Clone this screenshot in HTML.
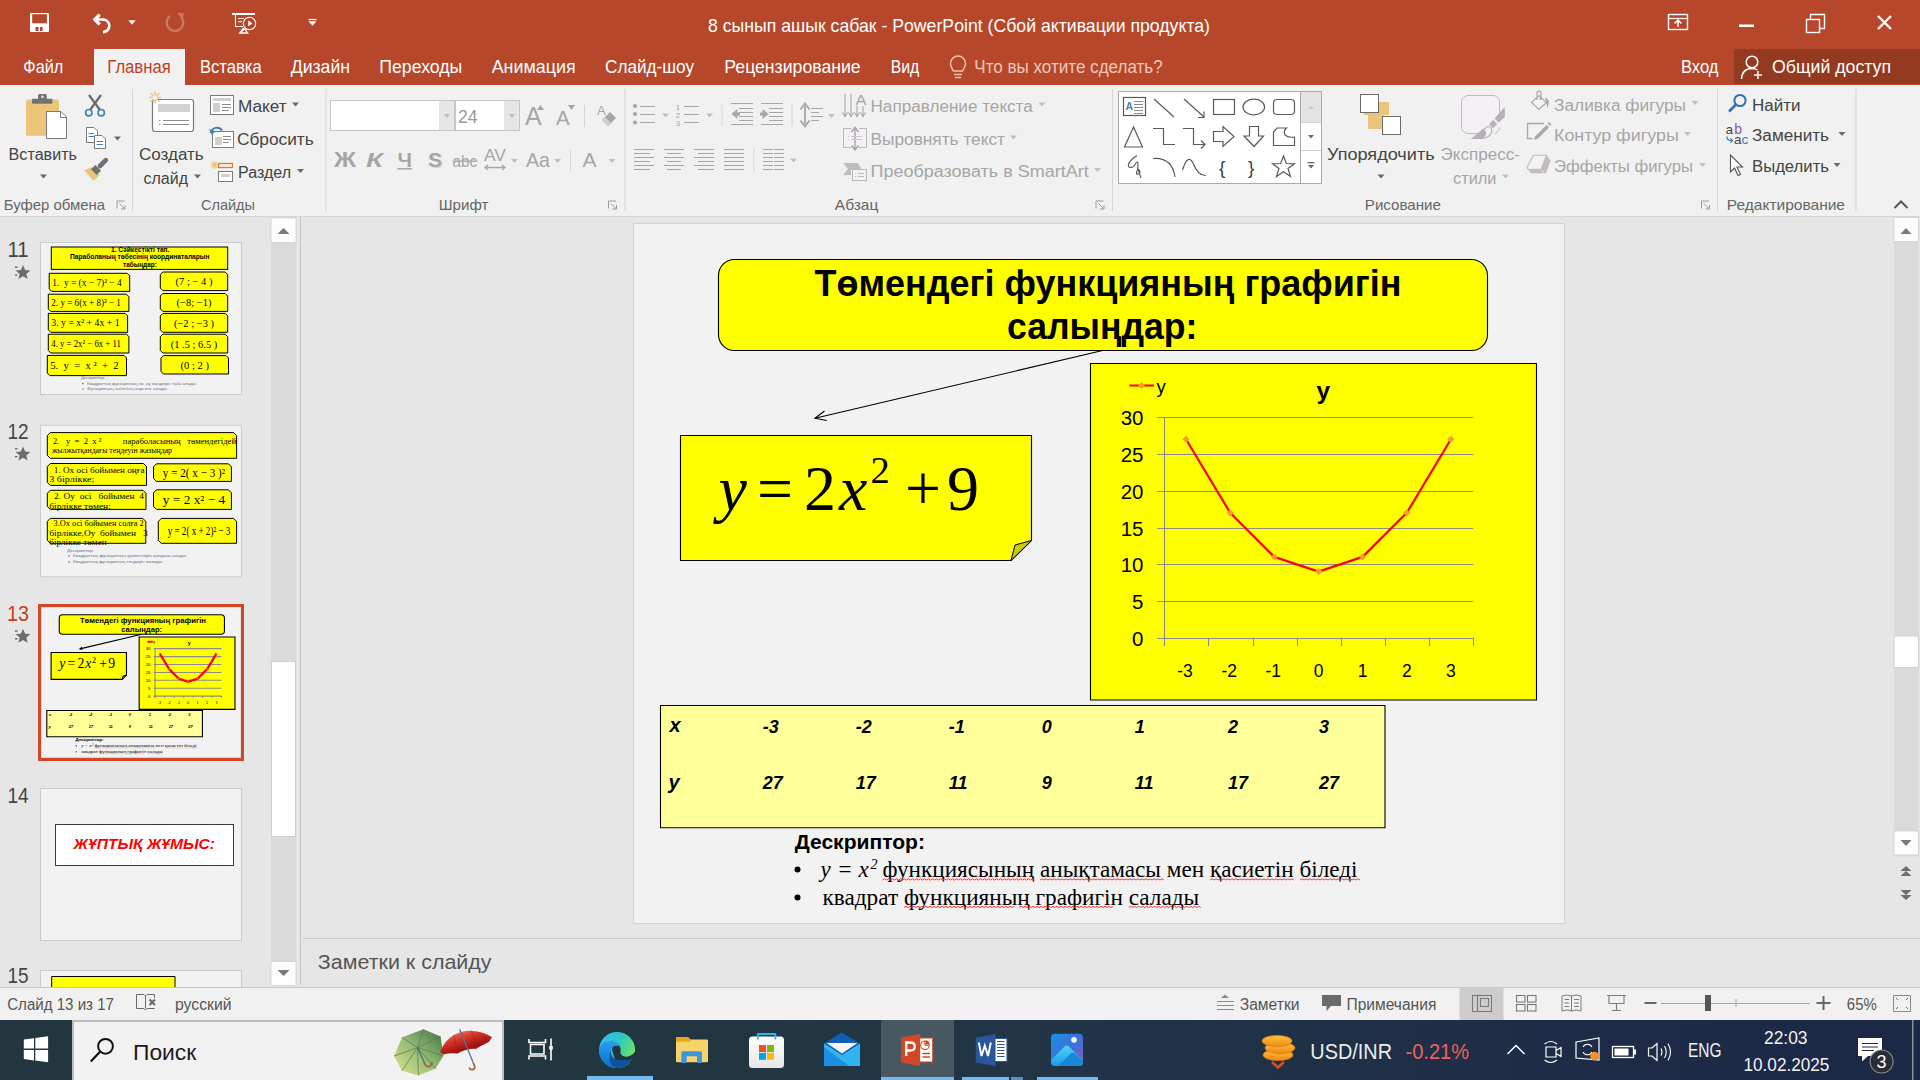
<!DOCTYPE html>
<html><head><meta charset="utf-8"><title>PowerPoint</title>
<style>*{margin:0;padding:0}html,body{width:1920px;height:1080px;overflow:hidden;background:#e6e6e6}svg{display:block}text{white-space:pre}#slide *{vector-effect:non-scaling-stroke}</style>
</head><body>
<svg width="1920" height="1080" viewBox="0 0 1920 1080" font-family="Liberation Sans">
<rect x="0" y="0" width="1920" height="85" fill="#b7472a" />
<rect x="0" y="85" width="1920" height="131" fill="#f1f1f1" />
<rect x="0" y="216" width="1920" height="1" fill="#d6d6d6" />
<rect x="0" y="217" width="1920" height="770" fill="#e6e6e6" />
<rect x="0" y="987" width="1920" height="33" fill="#f1f1f1" />
<rect x="0" y="987" width="1920" height="1" fill="#c6c6c6" />
<rect x="0" y="1020" width="1920" height="60" fill="#1f2e38" />
<rect x="30" y="13" width="19" height="19" fill="#ffffff" rx="1.2" />
<rect x="32.2" y="14.2" width="14.7" height="9.1" fill="#b7472a" />
<rect x="35.5" y="27" width="3" height="4" fill="#b7472a" />
<rect x="40" y="27" width="2.6" height="4" fill="#b7472a" />
<path d="M95,19.5 H103 A6.3,6.3 0 0 1 103,32.1 H104" fill="none" stroke="#ffffff" stroke-width="2.6" />
<path d="M92.5,19.5 L98.5,13.5 L100.8,15.8 L97.1,19.5 L100.8,23.2 L98.5,25.5 Z" fill="#ffffff" />
<path d="M128.25,20.25 L135.75,20.25 L132,24.75 Z" fill="#f0f0f0" />
<path d="M181.5,17.5 A8.3,8.3 0 1 1 170,16" fill="none" stroke="#cd7862" stroke-width="2.4" />
<path d="M177,12.5 L184,13.5 L182.5,20 Z" fill="#cd7862" />
<rect x="232" y="13" width="23" height="2" fill="#ffffff" />
<path d="M235.5,15 V26.5 H243 M238,18.5 H244 M238,21.8 H242" fill="none" stroke="#ffffff" stroke-width="1.1" />
<circle cx="249.5" cy="23.4" r="6.2" fill="none" stroke="#fff" stroke-width="1.1"/>
<path d="M248,20.3 L252.5,23.4 L248,26.5 Z" fill="#f0f0f0" />
<path d="M243,27.5 L238.5,33.8 H249 L245.5,29" fill="#ffffff" />
<path d="M241.5,32.3 H246.5 L244.5,30 Z" fill="#b7472a" />
<path d="M308.5,19.5 H316.5" fill="none" stroke="#ffffff" stroke-width="1.2" />
<path d="M308.5,21.25 L316.5,21.25 L312.5,25.75 Z" fill="#ffffff" />
<text x="708" y="31.5" font-size="18.5" fill="#ffffff" font-family="Liberation Sans" textLength="502" lengthAdjust="spacingAndGlyphs" >8 сынып ашык сабак - PowerPoint (Сбой активации продукта)</text>
<rect x="1668.5" y="14.5" width="19" height="15" fill="none" stroke="#ffffff" stroke-width="1.4" />
<path d="M1669,18.5 H1687" fill="none" stroke="#ffffff" stroke-width="1.2" />
<path d="M1678,27 V20.5 M1674.5,23.5 L1678,20 L1681.5,23.5" fill="none" stroke="#ffffff" stroke-width="1.5" />
<rect x="1739" y="24.5" width="15" height="2.5" fill="#ffffff" />
<rect x="1806.5" y="19.5" width="13" height="13" fill="none" stroke="#ffffff" stroke-width="1.4" />
<path d="M1810.5,19.5 V14.5 H1824.5 V28.5 H1819.5" fill="none" stroke="#ffffff" stroke-width="1.4" />
<path d="M1878,16 L1891,29 M1891,16 L1878,29" fill="none" stroke="#ffffff" stroke-width="2.4" />
<rect x="94" y="49" width="91" height="36" fill="#f1f1f1" />
<text x="23.3" y="73.3" font-size="18.3" fill="#ffffff" font-family="Liberation Sans" textLength="40.0" lengthAdjust="spacingAndGlyphs" >Файл</text>
<text x="107.3" y="73.3" font-size="18.3" fill="#c43e1c" font-family="Liberation Sans" textLength="63.4" lengthAdjust="spacingAndGlyphs" >Главная</text>
<text x="200" y="73.3" font-size="18.3" fill="#ffffff" font-family="Liberation Sans" textLength="61.7" lengthAdjust="spacingAndGlyphs" >Вставка</text>
<text x="290.7" y="73.3" font-size="18.3" fill="#ffffff" font-family="Liberation Sans" textLength="59.3" lengthAdjust="spacingAndGlyphs" >Дизайн</text>
<text x="379.3" y="73.3" font-size="18.3" fill="#ffffff" font-family="Liberation Sans" textLength="83.0" lengthAdjust="spacingAndGlyphs" >Переходы</text>
<text x="491.7" y="73.3" font-size="18.3" fill="#ffffff" font-family="Liberation Sans" textLength="84.0" lengthAdjust="spacingAndGlyphs" >Анимация</text>
<text x="605" y="73.3" font-size="18.3" fill="#ffffff" font-family="Liberation Sans" textLength="89" lengthAdjust="spacingAndGlyphs" >Слайд-шоу</text>
<text x="724.3" y="73.3" font-size="18.3" fill="#ffffff" font-family="Liberation Sans" textLength="136.4" lengthAdjust="spacingAndGlyphs" >Рецензирование</text>
<text x="890.7" y="73.3" font-size="18.3" fill="#ffffff" font-family="Liberation Sans" textLength="28.6" lengthAdjust="spacingAndGlyphs" >Вид</text>
<path d="M953.5,71 C951,67 950.5,65 950.5,63.5 A7.5,7.5 0 0 1 965.5,63.5 C965.5,65 965,67 962.5,71 Z" fill="none" stroke="#f2c2b2" stroke-width="1.5" />
<path d="M954,74.5 H962 M955,77.5 H961" fill="none" stroke="#f2c2b2" stroke-width="1.5" />
<text x="974.3" y="73.3" font-size="18.3" fill="#f2c7b8" font-family="Liberation Sans" textLength="188.4" lengthAdjust="spacingAndGlyphs" >Что вы хотите сделать?</text>
<text x="1681" y="73" font-size="18.3" fill="#ffffff" font-family="Liberation Sans" textLength="37.5" lengthAdjust="spacingAndGlyphs" >Вход</text>
<rect x="1734" y="49" width="186" height="35" fill="#943a21" />
<circle cx="1752" cy="62" r="5.8" fill="none" stroke="#fff" stroke-width="1.5"/>
<path d="M1741.5,79 C1742,72 1746,68.5 1752,68.5 C1754,68.5 1756,69 1757.5,70" fill="none" stroke="#ffffff" stroke-width="1.5" />
<path d="M1758,71 V79 M1754,75 H1762" fill="none" stroke="#ffffff" stroke-width="1.5" />
<text x="1772" y="73" font-size="18.3" fill="#ffffff" font-family="Liberation Sans" textLength="119" lengthAdjust="spacingAndGlyphs" >Общий доступ</text>
<path d="M26,101.5 Q26,99.6 28,99.6 H57 Q59,99.6 59,101.5 V135.7 H26 Z" fill="#ebc57a" />
<rect x="32" y="98.7" width="20.4" height="5" fill="#737373" rx="0.8" />
<rect x="38" y="94" width="8.8" height="5.5" fill="#737373" rx="1.5" />
<circle cx="42.4" cy="96.8" r="1.2" fill="#f1f1f1"/>
<path d="M46.5,111.5 H61 L66.5,117 V138.5 H46.5 Z" fill="#ffffff" stroke="#7a7a7a" stroke-width="1" />
<path d="M60.5,111.5 V117.5 H66.5" fill="none" stroke="#7a7a7a" stroke-width="1" />
<text x="8.6" y="160" font-size="17.3" fill="#444444" font-family="Liberation Sans" textLength="68.4" lengthAdjust="spacingAndGlyphs" >Вставить</text>
<path d="M40.0,174.5 L47.0,174.5 L43.5,178.5 Z" fill="#6a6a6a" />
<path d="M89,95 L100,110 M101,95 L90,110" fill="none" stroke="#6a6a6a" stroke-width="2.2" />
<circle cx="88.8" cy="112.7" r="3.2" fill="none" stroke="#3f7fbf" stroke-width="1.6"/>
<circle cx="101.2" cy="112.7" r="3.2" fill="none" stroke="#3f7fbf" stroke-width="1.6"/>
<path d="M86.5,127.5 H94 L97.5,131 V142.5 H86.5 Z" fill="#fff" stroke="#7a7a7a" stroke-width="1" />
<path d="M94.5,135.5 H102 L105.5,139 V148.5 H94.5 Z" fill="#fff" stroke="#7a7a7a" stroke-width="1" />
<path d="M88.5,133.5 H94 M88.5,136.5 H94 M96.5,141.5 H103 M96.5,144.5 H103" fill="none" stroke="#3f7fbf" stroke-width="1" />
<path d="M114.0,136.5 L121.0,136.5 L117.5,140.5 Z" fill="#6a6a6a" />
<path d="M84.1,170.2 L91.6,167.3 L99.7,174.9 L93.5,181 Z" fill="#ebc57a" />
<line x1="93.8" y1="172.2" x2="98.2" y2="167.8" stroke="#6f6f6f" stroke-width="8" />
<line x1="100" y1="166" x2="105.8" y2="160.2" stroke="#6f6f6f" stroke-width="4.6" stroke-linecap="round"/>
<text x="3.8" y="209.6" font-size="14.8" fill="#666666" font-family="Liberation Sans" textLength="101.2" lengthAdjust="spacingAndGlyphs" >Буфер обмена</text>
<path d="M117.0,208.5 V201.0 H124.5" fill="none" stroke="#9a9a9a" stroke-width="1" />
<path d="M119.5,203.5 L124.5,208.5 M125.0,205.0 V209.0 H121.0" fill="none" stroke="#9a9a9a" stroke-width="1" />
<rect x="132" y="89" width="1" height="122" fill="#d5d5d5" />
<rect x="152.5" y="99.5" width="41" height="32" fill="#fff" stroke="#7a7a7a" stroke-width="1.2" rx="2.5" />
<rect x="158" y="104" width="32" height="8" fill="#d2d2d2" />
<path d="M159,120.5 H160.5 M163,120.5 H189 M159,124.5 H160.5 M163,124.5 H189" fill="none" stroke="#8a8a8a" stroke-width="1" />
<path d="M155,91.5 V103.5 M149,97.5 H161 M150.8,93.3 L159.2,101.7 M159.2,93.3 L150.8,101.7" fill="none" stroke="#ebc57a" stroke-width="1.6" />
<circle cx="155" cy="97.5" r="2.3" fill="#f1f1f1"/>
<text x="139" y="160" font-size="17.3" fill="#444444" font-family="Liberation Sans" textLength="64.7" lengthAdjust="spacingAndGlyphs" >Создать</text>
<text x="143.5" y="184" font-size="17.3" fill="#444444" font-family="Liberation Sans" textLength="44.5" lengthAdjust="spacingAndGlyphs" >слайд</text>
<path d="M194.0,174.5 L201.0,174.5 L197.5,178.5 Z" fill="#6a6a6a" />
<rect x="210.5" y="95.5" width="23" height="19" fill="#fff" stroke="#7a7a7a" stroke-width="1" />
<rect x="213" y="98" width="18" height="3" fill="#cfcfcf" />
<rect x="213" y="103" width="7" height="9" fill="#cfcfcf" />
<path d="M222,104.5 H231 M222,107.5 H231 M222,110.5 H229" fill="none" stroke="#8a8a8a" stroke-width="1" />
<text x="238" y="112" font-size="17.3" fill="#444444" font-family="Liberation Sans" textLength="48.7" lengthAdjust="spacingAndGlyphs" >Макет</text>
<path d="M292.0,102.5 L299.0,102.5 L295.5,106.5 Z" fill="#6a6a6a" />
<rect x="212.5" y="131.5" width="21" height="16" fill="#fff" stroke="#7a7a7a" stroke-width="1" />
<rect x="215" y="137" width="7" height="8" fill="#cfcfcf" />
<path d="M223,136.5 H231 M223,139.5 H231 M223,142.5 H229" fill="none" stroke="#8a8a8a" stroke-width="1" />
<path d="M211,133 A6,6 0 0 1 222,130.5" fill="none" stroke="#3f7fbf" stroke-width="2" />
<path d="M209,129 L211.5,134.5 L216,131.5 Z" fill="#3f7fbf" />
<text x="237" y="144.6" font-size="17.3" fill="#444444" font-family="Liberation Sans" textLength="76.7" lengthAdjust="spacingAndGlyphs" >Сбросить</text>
<path d="M214.5,161 V169 M210.5,165 H218.5 M211.8,162.2 L217.2,167.8 M217.2,162.2 L211.8,167.8" fill="none" stroke="#ebc57a" stroke-width="1.2" />
<rect x="218.5" y="163.5" width="14" height="4" fill="none" stroke="#e07a2f" stroke-width="1.3" />
<rect x="218.5" y="171.5" width="14" height="10" fill="#fff" stroke="#7a7a7a" stroke-width="1" />
<rect x="221" y="174" width="9" height="3" fill="#cfcfcf" />
<text x="238" y="178" font-size="17.3" fill="#444444" font-family="Liberation Sans" textLength="53" lengthAdjust="spacingAndGlyphs" >Раздел</text>
<path d="M297.0,169.0 L304.0,169.0 L300.5,173.0 Z" fill="#6a6a6a" />
<text x="201" y="209.6" font-size="14.8" fill="#666666" font-family="Liberation Sans" textLength="54" lengthAdjust="spacingAndGlyphs" >Слайды</text>
<rect x="325.5" y="89" width="1" height="122" fill="#d5d5d5" />
<rect x="330.5" y="100.5" width="124" height="30" fill="#fff" stroke="#c6c6c6" stroke-width="1" />
<rect x="439" y="101" width="15" height="29" fill="#e6e6e6" />
<path d="M443.5,114.0 L450.5,114.0 L447,118.0 Z" fill="#c0c0c0" />
<rect x="455.5" y="100.5" width="64" height="30" fill="#fff" stroke="#c6c6c6" stroke-width="1" />
<rect x="504" y="101" width="15" height="29" fill="#e6e6e6" />
<path d="M508.5,114.0 L515.5,114.0 L512,118.0 Z" fill="#c0c0c0" />
<text x="458" y="123" font-size="17.5" fill="#9a9a9a" font-family="Liberation Sans" textLength="19.6" lengthAdjust="spacingAndGlyphs" >24</text>
<text x="525" y="124.5" font-size="25" fill="#a6a6a6" font-family="Liberation Sans" >A</text>
<path d="M537,110 L540.5,105 L544,110 Z" fill="#a6a6a6" />
<text x="556" y="124.5" font-size="20.5" fill="#a6a6a6" font-family="Liberation Sans" >A</text>
<path d="M568,105 L571.5,110 L575,105 Z" fill="#a6a6a6" />
<rect x="584" y="105" width="1" height="22" fill="#d5d5d5" />
<text x="597" y="115" font-size="13" fill="#a6a6a6" font-family="Liberation Sans" >A</text>
<path d="M602,120 L610,112 L616,118 L608,126 Z" fill="#a6a6a6" />
<path d="M602,120 L605,117 L611,123 L608,126 Z" fill="#d0d0d0" />
<text x="334" y="167.3" font-size="22" fill="#a6a6a6" font-family="Liberation Sans" font-weight="bold" textLength="22" lengthAdjust="spacingAndGlyphs">Ж</text>
<text x="366" y="167.3" font-size="21" fill="#a6a6a6" font-family="Liberation Sans" font-weight="bold" font-style="italic" textLength="17" lengthAdjust="spacingAndGlyphs">К</text>
<text x="397.5" y="166.5" font-size="20" fill="#a6a6a6" font-family="Liberation Sans" font-weight="bold" textLength="14.5" lengthAdjust="spacingAndGlyphs">Ч</text>
<rect x="397.5" y="168" width="14.5" height="1.5" fill="#a6a6a6" />
<text x="428" y="167.3" font-size="21" fill="#d6d6d6" font-family="Liberation Sans" font-weight="bold" transform="translate(1.2,1.2)">S</text>
<text x="428" y="167.3" font-size="21" fill="#a6a6a6" font-family="Liberation Sans" font-weight="bold" >S</text>
<text x="452.5" y="167" font-size="16" fill="#a6a6a6" font-family="Liberation Sans" textLength="24.5" lengthAdjust="spacingAndGlyphs">abc</text>
<rect x="452.5" y="160.5" width="25" height="1.3" fill="#a6a6a6" />
<text x="484" y="161" font-size="16" fill="#a6a6a6" font-family="Liberation Sans" textLength="22" lengthAdjust="spacingAndGlyphs">AV</text>
<path d="M485,167.5 H505 M488,165 L485,167.5 L488,170 M502,165 L505,167.5 L502,170" fill="none" stroke="#a6a6a6" stroke-width="1.3" />
<path d="M511.0,159.0 L518.0,159.0 L514.5,163.0 Z" fill="#c0c0c0" />
<text x="526" y="167.3" font-size="21" fill="#a6a6a6" font-family="Liberation Sans" textLength="24" lengthAdjust="spacingAndGlyphs">Aa</text>
<path d="M554.0,159.0 L561.0,159.0 L557.5,163.0 Z" fill="#c0c0c0" />
<rect x="570" y="150" width="1" height="22" fill="#d5d5d5" />
<text x="582.5" y="167.3" font-size="21" fill="#a6a6a6" font-family="Liberation Sans" >A</text>
<path d="M608.5,159.0 L615.5,159.0 L612,163.0 Z" fill="#c0c0c0" />
<text x="438.8" y="209.6" font-size="14.8" fill="#666666" font-family="Liberation Sans" textLength="49.6" lengthAdjust="spacingAndGlyphs" >Шрифт</text>
<path d="M608.5,208.5 V201.0 H616" fill="none" stroke="#9a9a9a" stroke-width="1" />
<path d="M611,203.5 L616,208.5 M616.5,205.0 V209.0 H612.5" fill="none" stroke="#9a9a9a" stroke-width="1" />
<rect x="624.5" y="89" width="1" height="122" fill="#d5d5d5" />
<circle cx="635" cy="106" r="2.1" fill="#a6a6a6"/>
<circle cx="635" cy="114" r="2.1" fill="#a6a6a6"/>
<circle cx="635" cy="122.5" r="2.1" fill="#a6a6a6"/>
<path d="M640,106.5 H655 M640,114.5 H655 M640,122.5 H655" fill="none" stroke="#a6a6a6" stroke-width="1" />
<path d="M662.0,113.5 L669.0,113.5 L665.5,117.5 Z" fill="#c0c0c0" />
<text x="675.8" y="110" font-size="7.8" fill="#a6a6a6" font-family="Liberation Sans" >1</text>
<text x="675.8" y="118" font-size="7.8" fill="#a6a6a6" font-family="Liberation Sans" >2</text>
<text x="675.8" y="126" font-size="7.8" fill="#a6a6a6" font-family="Liberation Sans" >3</text>
<path d="M684,106.5 H699 M684,114.5 H699 M684,122.5 H699" fill="none" stroke="#a6a6a6" stroke-width="1" />
<path d="M706.0,113.5 L713.0,113.5 L709.5,117.5 Z" fill="#c0c0c0" />
<rect x="721.5" y="105" width="1" height="21" fill="#d5d5d5" />
<path d="M739,108.5 H753 M739,112.5 H753 M739,116.5 H753 M739,120.5 H753" fill="none" stroke="#a6a6a6" stroke-width="1" />
<path d="M731,103.5 H753 M731,124.5 H753" fill="none" stroke="#a6a6a6" stroke-width="1" />
<path d="M737.5,109 L731.5,114 L737.5,119 Z" fill="#a6a6a6" />
<rect x="735" y="112.5" width="5" height="3" fill="#a6a6a6" />
<path d="M769,108.5 H783 M769,112.5 H783 M769,116.5 H783 M769,120.5 H783" fill="none" stroke="#a6a6a6" stroke-width="1" />
<path d="M761,103.5 H783 M761,124.5 H783" fill="none" stroke="#a6a6a6" stroke-width="1" />
<path d="M762.5,109 L768.5,114 L762.5,119 Z" fill="#a6a6a6" />
<rect x="760" y="112.5" width="4" height="3" fill="#a6a6a6" />
<rect x="791.5" y="105" width="1" height="21" fill="#d5d5d5" />
<path d="M805,106 V124" fill="none" stroke="#a6a6a6" stroke-width="1.8" />
<path d="M800.5,109.5 L805,103.5 L809.5,109.5 M800.5,120.5 L805,126.5 L809.5,120.5" fill="none" stroke="#a6a6a6" stroke-width="1.8" />
<path d="M811,108.5 H823 M811,116.5 H823" fill="none" stroke="#a6a6a6" stroke-width="1" />
<path d="M811,112.5 H819 M811,120.5 H819" fill="none" stroke="#a6a6a6" stroke-width="1" />
<path d="M828.0,114.0 L835.0,114.0 L831.5,118.0 Z" fill="#c0c0c0" />
<path d="M845,94 V116.5 M851,94 V116.5 M857,106 V116.5 M863,106 V116.5" fill="none" stroke="#a6a6a6" stroke-width="1.1" />
<path d="M842.5,112.5 L845,116.5 L847.5,112.5 M848.5,112.5 L851,116.5 L853.5,112.5 M854.5,112.5 L857,116.5 L859.5,112.5 M860.5,112.5 L863,116.5 L865.5,112.5" fill="none" stroke="#a6a6a6" stroke-width="1.1" />
<text x="855.5" y="104.5" font-size="14" fill="#a6a6a6" font-family="Liberation Sans" textLength="11" lengthAdjust="spacingAndGlyphs">A</text>
<text x="870.5" y="111.8" font-size="17.3" fill="#a6a6a6" font-family="Liberation Sans" textLength="162.3" lengthAdjust="spacingAndGlyphs" >Направление текста</text>
<path d="M1038.5,102.5 L1045.5,102.5 L1042,106.5 Z" fill="#c0c0c0" />
<rect x="843.5" y="128.5" width="23" height="19" fill="#f5f0f5" />
<path d="M851,128.5 H843.5 V147.5 H851 M859,128.5 H866.5 V147.5 H859" fill="none" stroke="#b9b9b9" stroke-width="1" />
<path d="M855,129 V149.5" fill="none" stroke="#a6a6a6" stroke-width="1.4" />
<path d="M851.5,132 L855,127.5 L858.5,132 M851.5,145.5 L855,149.8 L858.5,145.5" fill="none" stroke="#a6a6a6" stroke-width="1.6" />
<path d="M848,136.5 H849 M851,136.5 H862 M848,139.5 H849 M851,139.5 H862" fill="none" stroke="#c8c8c8" stroke-width="1" />
<text x="870.5" y="144.9" font-size="17.3" fill="#a6a6a6" font-family="Liberation Sans" textLength="134.5" lengthAdjust="spacingAndGlyphs" >Выровнять текст</text>
<path d="M1010.0,135.5 L1017.0,135.5 L1013.5,139.5 Z" fill="#c0c0c0" />
<path d="M843,163 H858 L862,170 H851 V175 H843 L848,169 Z" fill="#bdbdbd" />
<rect x="852.5" y="169.5" width="14" height="11" fill="#f5f0f5" stroke="#b9b9b9" stroke-width="1" />
<path d="M855,173.5 H856 M857.5,173.5 H864 M855,176.5 H856 M857.5,176.5 H864" fill="none" stroke="#bdbdbd" stroke-width="1" />
<text x="870.5" y="177.4" font-size="17.3" fill="#a6a6a6" font-family="Liberation Sans" textLength="218.2" lengthAdjust="spacingAndGlyphs" >Преобразовать в SmartArt</text>
<path d="M1094.0,168.0 L1101.0,168.0 L1097.5,172.0 Z" fill="#c0c0c0" />
<path d="M634,149.5 H654 M634,157.5 H654 M634,165.5 H654" fill="none" stroke="#a6a6a6" stroke-width="1" />
<path d="M634,153.5 H650 M634,161.5 H650 M634,169.5 H650" fill="none" stroke="#a6a6a6" stroke-width="1" />
<path d="M664,149.5 H684 M664,157.5 H684 M664,165.5 H684" fill="none" stroke="#a6a6a6" stroke-width="1" />
<path d="M667,153.5 H681 M667,161.5 H681 M667,169.5 H681" fill="none" stroke="#a6a6a6" stroke-width="1" />
<path d="M694,149.5 H714 M694,157.5 H714 M694,165.5 H714" fill="none" stroke="#a6a6a6" stroke-width="1" />
<path d="M698,153.5 H714 M698,161.5 H714 M698,169.5 H714" fill="none" stroke="#a6a6a6" stroke-width="1" />
<path d="M724,149.5 H744 M724,153.5 H744 M724,157.5 H744 M724,161.5 H744 M724,165.5 H744 M724,169.5 H744" fill="none" stroke="#a6a6a6" stroke-width="1" />
<rect x="753.3" y="148" width="1" height="24" fill="#d5d5d5" />
<path d="M763,149.5 H773 M763,153.5 H773 M763,157.5 H773 M763,161.5 H773 M763,165.5 H773 M763,169.5 H773" fill="none" stroke="#a6a6a6" stroke-width="1" />
<path d="M774,149.5 H784 M774,153.5 H784 M774,157.5 H784 M774,161.5 H784 M774,165.5 H784 M774,169.5 H784" fill="none" stroke="#a6a6a6" stroke-width="1" />
<path d="M790.0,158.5 L797.0,158.5 L793.5,162.5 Z" fill="#c0c0c0" />
<text x="834.8" y="209.5" font-size="14.8" fill="#666666" font-family="Liberation Sans" textLength="43.5" lengthAdjust="spacingAndGlyphs" >Абзац</text>
<path d="M1096.0,208.5 V201.0 H1103.5" fill="none" stroke="#9a9a9a" stroke-width="1" />
<path d="M1098.5,203.5 L1103.5,208.5 M1104.0,205.0 V209.0 H1100.0" fill="none" stroke="#9a9a9a" stroke-width="1" />
<rect x="1112" y="89" width="1" height="122" fill="#d5d5d5" />
<rect x="1118.5" y="91.5" width="182" height="92" fill="#fff" stroke="#ababab" stroke-width="1" />
<rect x="1300.5" y="91.5" width="21" height="92" fill="#fff" stroke="#ababab" stroke-width="1" />
<rect x="1301" y="92" width="20" height="30.5" fill="#e3e3e3" />
<rect x="1301" y="122" width="20" height="1" fill="#d0d0d0" />
<rect x="1301" y="150" width="20" height="1" fill="#d0d0d0" />
<path d="M1308,109 L1311,105.5 L1314,109 Z" fill="#c8c8c8" />
<path d="M1308,135 L1314,135 L1311,138.5 Z" fill="#6a6a6a" />
<rect x="1307.5" y="162" width="7" height="1.3" fill="#6a6a6a" />
<path d="M1308,165 L1314,165 L1311,168.5 Z" fill="#6a6a6a" />
<rect x="1123.5" y="97.5" width="22" height="18" fill="#fff" stroke="#595959" stroke-width="1.2" />
<text x="1125.5" y="110" font-size="10.5" fill="#3f7fbf" font-family="Liberation Sans" font-weight="bold" >A</text>
<path d="M1134,101.5 H1143 M1134,104.5 H1143 M1134,107.5 H1143 M1134,110.5 H1143 M1134,113.5 H1143" fill="none" stroke="#8a8a8a" stroke-width="1" />
<line x1="1154" y1="99" x2="1174" y2="117" stroke="#5a5a5a" stroke-width="1.2" />
<line x1="1184" y1="99" x2="1204" y2="117" stroke="#5a5a5a" stroke-width="1.2" />
<path d="M1204,111.5 V117.5 H1198" fill="none" stroke="#5a5a5a" stroke-width="1.2" />
<rect x="1213.5" y="99.5" width="21" height="15" fill="none" stroke="#5a5a5a" stroke-width="1.2" />
<ellipse cx="1253.8" cy="107" rx="10.8" ry="7.8" fill="none" stroke="#5a5a5a" stroke-width="1.2"/>
<rect x="1273.5" y="99.5" width="21" height="15" fill="none" stroke="#5a5a5a" stroke-width="1.2" rx="3.5" />
<path d="M1133.5,127 L1142.5,147 H1124.5 Z" fill="none" stroke="#5a5a5a" stroke-width="1.2" />
<path d="M1153,128.5 H1163.5 V144.5 H1175" fill="none" stroke="#5a5a5a" stroke-width="1.2" />
<path d="M1183,128.5 H1193.5 V144.5 H1205 M1201,140.5 L1205,144.5 L1201,148.5" fill="none" stroke="#5a5a5a" stroke-width="1.2" />
<path d="M1213.5,131.5 H1223 V126.5 L1234,136.5 L1223,146.5 V141.5 H1213.5 Z" fill="none" stroke="#5a5a5a" stroke-width="1.2" />
<path d="M1249.5,126.5 H1258.5 V136 H1263.5 L1254,146.5 L1244,136 H1249.5 Z" fill="none" stroke="#5a5a5a" stroke-width="1.2" />
<path d="M1273.5,132 L1277,128 H1286.5 Q1283,131 1285,135 Q1288,138 1294.5,137 V145.5 H1273.5 Z" fill="none" stroke="#5a5a5a" stroke-width="1.2" />
<path d="M1137,155.5 Q1126,163 1129,167 Q1133,169 1136,163 Q1139,159 1137.5,170 Q1135,175 1138,174 Q1142,172 1138,169 L1141,178" fill="none" stroke="#5a5a5a" stroke-width="1.1" />
<path d="M1153,158.5 Q1172,157 1175,177" fill="none" stroke="#5a5a5a" stroke-width="1.2" />
<path d="M1182.5,170 Q1188,153 1193,163 Q1198,176 1206,175.5" fill="none" stroke="#5a5a5a" stroke-width="1.2" />
<text x="1219" y="174" font-size="19" fill="#404040" font-family="Liberation Sans" >{</text>
<text x="1248" y="174" font-size="19" fill="#404040" font-family="Liberation Sans" >}</text>
<path d="M1283.5,156 L1286.3,163.5 L1294.5,163.8 L1288,168.5 L1290.5,176.5 L1283.5,171.8 L1276.5,176.5 L1279,168.5 L1272.5,163.8 L1280.7,163.5 Z" fill="none" stroke="#5a5a5a" stroke-width="1.2" />
<rect x="1364" y="102" width="25" height="13" fill="#ebc57a" />
<rect x="1368" y="111" width="16" height="18" fill="#ebc57a" />
<rect x="1360.5" y="94.5" width="18" height="18" fill="#fff" stroke="#6a6a6a" stroke-width="1" />
<rect x="1382.5" y="116.5" width="18" height="18" fill="#fff" stroke="#6a6a6a" stroke-width="1" />
<text x="1327" y="160" font-size="17.3" fill="#444444" font-family="Liberation Sans" textLength="107.6" lengthAdjust="spacingAndGlyphs" >Упорядочить</text>
<path d="M1377.5,174.5 L1384.5,174.5 L1381,178.5 Z" fill="#6a6a6a" />
<rect x="1461.5" y="95.5" width="38" height="38" fill="#f5f0f5" stroke="#bdbdbd" stroke-width="1" rx="6.5" />
<path d="M1490,134.5 L1502,122 V110" fill="none" stroke="#f1f1f1" stroke-width="4" />
<path d="M1504.8,107 V117 L1498.5,122.5 L1494.5,118.5 Z" fill="#b4b2b5" />
<path d="M1493.2,120 L1497.2,124 L1493,128.2 L1489,124.2 Z" fill="#b4b2b5" />
<path d="M1487.5,126.5 Q1493,126.5 1491.5,132.5 Q1489,138.5 1481,138.5 H1472.5 Z" fill="#f5f0f5" stroke="#b4b2b5" stroke-width="1.2" />
<path d="M1472.5,138.5 L1483,128.5 Q1487,131 1486,135 Q1484,138.5 1480,138.5 Z" fill="#b4b2b5" />
<text x="1440.5" y="160" font-size="17.3" fill="#a6a6a6" font-family="Liberation Sans" textLength="79.5" lengthAdjust="spacingAndGlyphs" >Экспресс-</text>
<text x="1453" y="183.6" font-size="17.3" fill="#a6a6a6" font-family="Liberation Sans" textLength="43.5" lengthAdjust="spacingAndGlyphs" >стили</text>
<path d="M1502.0,174.5 L1509.0,174.5 L1505.5,178.5 Z" fill="#c0c0c0" />
<path d="M1531.5,102.5 L1539,95.5 L1546.5,102.5 L1539,109.5 Z" fill="#f5f0f5" stroke="#a9a9a9" stroke-width="1.2" />
<path d="M1537,100 V93.5 Q1537,91.2 1539,91.2 Q1541,91.2 1541,93.5 V99" fill="none" stroke="#a9a9a9" stroke-width="1.2" />
<circle cx="1540.5" cy="98.8" r="1.2" fill="#a9a9a9"/>
<path d="M1545,97.5 Q1549.5,99 1548.8,103 L1547.5,108 L1546.5,103 Z" fill="#a9a9a9" />
<text x="1554" y="110.7" font-size="17.3" fill="#a6a6a6" font-family="Liberation Sans" textLength="132" lengthAdjust="spacingAndGlyphs" >Заливка фигуры</text>
<path d="M1691.5,101.0 L1698.5,101.0 L1695,105.0 Z" fill="#c0c0c0" />
<path d="M1544,123.5 H1527.5 V138.5 H1532.5" fill="none" stroke="#a9a9a9" stroke-width="1.3" />
<path d="M1535,136.5 L1546.5,125 L1549,127.5 L1537.5,139 L1533.5,139.8 Z" fill="#a9a9a9" />
<path d="M1547.5,123.5 L1549,122 L1551.5,124.5 L1550,126 Z" fill="#a9a9a9" />
<text x="1554" y="141" font-size="17.3" fill="#a6a6a6" font-family="Liberation Sans" textLength="124.7" lengthAdjust="spacingAndGlyphs" >Контур фигуры</text>
<path d="M1684.0,132.0 L1691.0,132.0 L1687.5,136.0 Z" fill="#c0c0c0" />
<path d="M1546.5,155.3 L1550.5,160.5 L1546,173.3 H1531 L1527.7,169.3 H1541.1 Z" fill="#bebcbf" />
<path d="M1533.5,155.3 H1546.5 L1541.1,169.3 H1527.7 Q1527,167.5 1528,165.5 Z" fill="#f5f0f5" stroke="#bebcbf" stroke-width="1.1" />
<path d="M1541.1,169.3 L1544.5,173.3" fill="none" stroke="#f1f1f1" stroke-width="0.8" />
<text x="1554" y="171.9" font-size="17.3" fill="#a6a6a6" font-family="Liberation Sans" textLength="139" lengthAdjust="spacingAndGlyphs" >Эффекты фигуры</text>
<path d="M1699.0,163.0 L1706.0,163.0 L1702.5,167.0 Z" fill="#c0c0c0" />
<text x="1364.8" y="209.7" font-size="14.8" fill="#666666" font-family="Liberation Sans" textLength="76.2" lengthAdjust="spacingAndGlyphs" >Рисование</text>
<path d="M1701.5,208.5 V201.0 H1709" fill="none" stroke="#9a9a9a" stroke-width="1" />
<path d="M1704,203.5 L1709,208.5 M1709.5,205.0 V209.0 H1705.5" fill="none" stroke="#9a9a9a" stroke-width="1" />
<rect x="1717" y="89" width="1" height="122" fill="#d5d5d5" />
<circle cx="1740" cy="100.5" r="5.6" fill="none" stroke="#2f6fb4" stroke-width="2"/>
<line x1="1736" y1="104.5" x2="1729" y2="111.5" stroke="#2f6fb4" stroke-width="2.6" />
<text x="1752" y="110.7" font-size="17.3" fill="#444444" font-family="Liberation Sans" textLength="48.4" lengthAdjust="spacingAndGlyphs" >Найти</text>
<text x="1725.8" y="133.5" font-size="13" fill="#444" font-family="Liberation Sans" >a</text>
<text x="1734.2" y="133.5" font-size="14" fill="#8a55b8" font-family="Liberation Sans" >b</text>
<text x="1734" y="143.8" font-size="13.5" fill="#444" font-family="Liberation Sans" >a</text>
<text x="1741.5" y="143.8" font-size="13.5" fill="#3a78b8" font-family="Liberation Sans" >c</text>
<path d="M1727,136.5 Q1727,140.5 1731,140.5 H1732.5 M1730.3,138.3 L1732.5,140.5 L1730.3,142.7" fill="none" stroke="#3a78b8" stroke-width="1.2" />
<text x="1752" y="141" font-size="17.3" fill="#444444" font-family="Liberation Sans" textLength="77" lengthAdjust="spacingAndGlyphs" >Заменить</text>
<path d="M1838.5,132.0 L1845.5,132.0 L1842,136.0 Z" fill="#6a6a6a" />
<path d="M1730.5,155 V172 L1734.5,168 L1738,175.5 L1740.5,174.5 L1737,167 H1742.5 Z" fill="#fff" stroke="#555" stroke-width="1.1" />
<text x="1752" y="171.9" font-size="17.3" fill="#444444" font-family="Liberation Sans" textLength="77" lengthAdjust="spacingAndGlyphs" >Выделить</text>
<path d="M1833.5,163.0 L1840.5,163.0 L1837,167.0 Z" fill="#6a6a6a" />
<text x="1726.8" y="209.7" font-size="14.8" fill="#666666" font-family="Liberation Sans" textLength="118.2" lengthAdjust="spacingAndGlyphs" >Редактирование</text>
<rect x="1855.4" y="89" width="1" height="122" fill="#d5d5d5" />
<path d="M1894.5,208 L1901,201.5 L1907.5,208" fill="none" stroke="#555" stroke-width="2" />
<rect x="300" y="217" width="1" height="768" fill="#c6c6c6" />
<rect x="271" y="217" width="25" height="768" fill="#dadada" />
<rect x="271" y="218" width="25" height="24.5" fill="#fdfdfd" stroke="#d0d0d0" stroke-width="0.8" />
<path d="M277.5,234 L283.5,228 L289.5,234 Z" fill="#7a7a7a" />
<rect x="271.5" y="661.5" width="24" height="175" fill="#fdfdfd" stroke="#c8c8c8" stroke-width="0.8" />
<rect x="271" y="961.5" width="25" height="24" fill="#fdfdfd" stroke="#d0d0d0" stroke-width="0.8" />
<path d="M277.5,970 L289.5,970 L283.5,976 Z" fill="#7a7a7a" />
<text x="7.4" y="257" font-size="21.5" fill="#444" font-family="Liberation Sans" textLength="21.1" lengthAdjust="spacingAndGlyphs" >11</text>
<polygon points="23.0,265.0 25.1,270.0 30.4,270.4 26.3,273.9 27.6,279.1 23.0,276.3 18.4,279.1 19.7,273.9 15.6,270.4 20.9,270.0" fill="#6d6d6d"/>
<path d="M15,267.3 H17.5 M15,275.1 H17.5" fill="none" stroke="#6d6d6d" stroke-width="1.4" />
<text x="7.4" y="438.6" font-size="21.5" fill="#444" font-family="Liberation Sans" textLength="21.1" lengthAdjust="spacingAndGlyphs" >12</text>
<polygon points="23.0,446.5 25.1,451.5 30.4,451.9 26.3,455.4 27.6,460.6 23.0,457.8 18.4,460.6 19.7,455.4 15.6,451.9 20.9,451.5" fill="#6d6d6d"/>
<path d="M15,448.8 H17.5 M15,456.6 H17.5" fill="none" stroke="#6d6d6d" stroke-width="1.4" />
<text x="7" y="620.5" font-size="21.5" fill="#c43e1c" font-family="Liberation Sans" textLength="22" lengthAdjust="spacingAndGlyphs" >13</text>
<polygon points="23.0,628.7 25.1,633.7 30.4,634.1 26.3,637.6 27.6,642.8 23.0,640.0 18.4,642.8 19.7,637.6 15.6,634.1 20.9,633.7" fill="#6d6d6d"/>
<path d="M15,631.0 H17.5 M15,638.8 H17.5" fill="none" stroke="#6d6d6d" stroke-width="1.4" />
<text x="7.4" y="803" font-size="21.5" fill="#444" font-family="Liberation Sans" textLength="21.1" lengthAdjust="spacingAndGlyphs" >14</text>
<text x="7.4" y="983" font-size="21.5" fill="#444" font-family="Liberation Sans" textLength="21.1" lengthAdjust="spacingAndGlyphs" >15</text>
<rect x="40.5" y="242.5" width="201" height="152" fill="#f2f2f2" stroke="#cbcbcb" stroke-width="1" />
<rect x="40.5" y="425.3" width="201" height="151.5" fill="#f2f2f2" stroke="#cbcbcb" stroke-width="1" />
<rect x="40.5" y="788.5" width="201" height="152" fill="#f2f2f2" stroke="#cbcbcb" stroke-width="1" />
<rect x="40.5" y="970.5" width="201" height="16.5" fill="#f2f2f2" />
<path d="M40.5,987 V970.5 H241.5 V987" fill="none" stroke="#cbcbcb" stroke-width="1" />
<rect x="51.3" y="247" width="176.4" height="22.4" fill="#ffff00" stroke="#000" stroke-width="1" />
<text x="111" y="252" font-size="7.5" fill="#000" font-family="Liberation Sans" font-weight="bold" textLength="58.4" lengthAdjust="spacingAndGlyphs" >1. Сәйкестікті тап.</text>
<text x="70" y="259.3" font-size="6.8" fill="#000" font-family="Liberation Sans" font-weight="bold" textLength="139.5" lengthAdjust="spacingAndGlyphs" >Параболаның төбесінің координаталарын</text>
<text x="123" y="266.8" font-size="6.8" fill="#000" font-family="Liberation Sans" font-weight="bold" textLength="33.8" lengthAdjust="spacingAndGlyphs" >табыңдар:</text>
<path d="M49.2,273.3 H127.19999999999999 L129.7,275.8 V291.4 H51.7 L49.2,288.9 Z" fill="#ffff00" stroke="#000" stroke-width="1" />
<text x="52.2" y="285.85" font-size="10" fill="#000" font-family="Liberation Serif" textLength="69.5" lengthAdjust="spacingAndGlyphs" >1.  y = (x − 7)² − 4</text>
<path d="M48.3,294.2 H126.4 L128.9,296.7 V311.4 H50.8 L48.3,308.9 Z" fill="#ffff00" stroke="#000" stroke-width="1" />
<text x="51.3" y="306.29999999999995" font-size="10" fill="#000" font-family="Liberation Serif" textLength="69.6" lengthAdjust="spacingAndGlyphs" >2. y = 6(x + 8)² − 1</text>
<path d="M48.3,313.4 H125.1 L127.6,315.9 V332.3 H50.8 L48.3,329.8 Z" fill="#ffff00" stroke="#000" stroke-width="1" />
<text x="51.3" y="326.35" font-size="10" fill="#000" font-family="Liberation Serif" textLength="68.3" lengthAdjust="spacingAndGlyphs" >3. y = x² + 4x + 1</text>
<path d="M48.3,334.2 H126.4 L128.9,336.7 V353 H50.8 L48.3,350.5 Z" fill="#ffff00" stroke="#000" stroke-width="1" />
<text x="51.3" y="347.1" font-size="10" fill="#000" font-family="Liberation Serif" textLength="69.6" lengthAdjust="spacingAndGlyphs" >4. y = 2x² − 6x + 11</text>
<path d="M47.3,355.4 H124.0 L126.5,357.9 V375.6 H49.8 L47.3,373.1 Z" fill="#ffff00" stroke="#000" stroke-width="1" />
<text x="50.3" y="369.0" font-size="10" fill="#000" font-family="Liberation Serif" textLength="68.2" lengthAdjust="spacingAndGlyphs" >5.  y  =  x ²  +  2</text>
<path d="M162.8,272 H225.2 L227.7,274.5 V290.6 H162.8 L160.3,288.1 V274.5 Z" fill="#ffff00" stroke="#000" stroke-width="1" />
<text x="194.0" y="285.3" font-size="10.5" fill="#000" font-family="Liberation Serif" text-anchor="middle" >(7 ; − 4 )</text>
<path d="M162.8,293.5 H225.2 L227.7,296.0 V311.4 H162.8 L160.3,308.9 V296.0 Z" fill="#ffff00" stroke="#000" stroke-width="1" />
<text x="194.0" y="306.45" font-size="10.5" fill="#000" font-family="Liberation Serif" text-anchor="middle" >(−8; −1)</text>
<path d="M162.8,313.4 H225.2 L227.7,315.9 V332.3 H162.8 L160.3,329.8 V315.9 Z" fill="#ffff00" stroke="#000" stroke-width="1" />
<text x="194.0" y="326.85" font-size="10.5" fill="#000" font-family="Liberation Serif" text-anchor="middle" >(−2 ; −3 )</text>
<path d="M162.8,334.2 H225.2 L227.7,336.7 V353 H162.8 L160.3,350.5 V336.7 Z" fill="#ffff00" stroke="#000" stroke-width="1" />
<text x="194.0" y="347.6" font-size="10.5" fill="#000" font-family="Liberation Serif" text-anchor="middle" >(1 .5 ; 6.5 )</text>
<path d="M163.5,355.6 H226.0 L228.5,358.1 V374 H163.5 L161,371.5 V358.1 Z" fill="#ffff00" stroke="#000" stroke-width="1" />
<text x="194.75" y="368.8" font-size="10.5" fill="#000" font-family="Liberation Serif" text-anchor="middle" >(0 ; 2 )</text>
<text x="81" y="379" font-size="3.6" fill="#6b6b8a" font-family="Liberation Sans" textLength="24" lengthAdjust="spacingAndGlyphs" >Дескриптор:</text>
<circle cx="83" cy="383.5" r="0.8" fill="#6b6b8a"/>
<circle cx="83" cy="389" r="0.8" fill="#6b6b8a"/>
<text x="87" y="384.8" font-size="3.6" fill="#6b6b8a" font-family="Liberation Sans" textLength="110" lengthAdjust="spacingAndGlyphs" >Квадраттық функцияның ox, oy мәндерін таба алады.</text>
<text x="87" y="390.3" font-size="3.6" fill="#6b6b8a" font-family="Liberation Sans" textLength="81" lengthAdjust="spacingAndGlyphs" >Функцияның төбесінің көрсете алады.</text>
<path d="M50.3,432.6 H233.6 L236.6,435.6 V458.3 H50.3 L47.3,455.3 V435.6 Z" fill="#ffff00" stroke="#000" stroke-width="1" />
<text x="53" y="443.5" font-size="9" fill="#000" font-family="Liberation Serif" textLength="183" lengthAdjust="spacingAndGlyphs" >2.   y  =  2  x ²          параболасының   төмендегідей</text>
<text x="52" y="452.5" font-size="9" fill="#000" font-family="Liberation Serif" textLength="120" lengthAdjust="spacingAndGlyphs" >жылжытқандағы теңдеуін жазыңдар</text>
<path d="M50.3,463.5 H143.5 L146.5,466.5 V485.4 H50.3 L47.3,482.4 V466.5 Z" fill="#ffff00" stroke="#000" stroke-width="1" />
<text x="49.3" y="472.5" font-size="9.2" fill="#000" font-family="Liberation Serif" textLength="95.2" lengthAdjust="spacingAndGlyphs" >  1. Ox осі бойымен оңға</text>
<text x="49.3" y="482.0" font-size="9.2" fill="#000" font-family="Liberation Serif" textLength="45.1" lengthAdjust="spacingAndGlyphs" >3 бірлікке;</text>
<path d="M50.3,490.3 H143 L146,493.3 V509.4 H50.3 L47.3,506.4 V493.3 Z" fill="#ffff00" stroke="#000" stroke-width="1" />
<text x="49.3" y="499.3" font-size="9.2" fill="#000" font-family="Liberation Serif" textLength="94.7" lengthAdjust="spacingAndGlyphs" >  2. Oy  осі   бойымен  4</text>
<text x="49.3" y="508.8" font-size="9.2" fill="#000" font-family="Liberation Serif" textLength="61.5" lengthAdjust="spacingAndGlyphs" >бірлікке төмен;</text>
<path d="M50.3,518.4 H142.8 L145.8,521.4 V543.3 H50.3 L47.3,540.3 V521.4 Z" fill="#ffff00" stroke="#000" stroke-width="1" />
<text x="49.3" y="526.4" font-size="9.2" fill="#000" font-family="Liberation Serif" textLength="94.5" lengthAdjust="spacingAndGlyphs" >  3.Ox осі бойымен солға 2</text>
<text x="49.3" y="535.9" font-size="9.2" fill="#000" font-family="Liberation Serif" textLength="98.4" lengthAdjust="spacingAndGlyphs" >бірлікке,Oy  бойымен   3</text>
<text x="49.3" y="545.4" font-size="9.2" fill="#000" font-family="Liberation Serif" textLength="57.4" lengthAdjust="spacingAndGlyphs" >бірлікке төмен</text>
<path d="M156.5,463.8 H228.4 L231.4,466.8 V481.4 H156.5 L153.5,478.4 V466.8 Z" fill="#ffff00" stroke="#000" stroke-width="1" />
<text x="162.848" y="477.1" font-size="12.5" fill="#000" font-family="Liberation Serif" textLength="62.3" lengthAdjust="spacingAndGlyphs" >y = 2( x − 3 )²</text>
<path d="M156.5,489.8 H228.4 L231.4,492.8 V509.4 H156.5 L153.5,506.4 V492.8 Z" fill="#ffff00" stroke="#000" stroke-width="1" />
<text x="162.848" y="504.1" font-size="12.5" fill="#000" font-family="Liberation Serif" textLength="62.3" lengthAdjust="spacingAndGlyphs" >y = 2 x² − 4</text>
<path d="M161.3,518.4 H233.6 L236.6,521.4 V543.3 H161.3 L158.3,540.3 V521.4 Z" fill="#ffff00" stroke="#000" stroke-width="1" />
<text x="167.696" y="535.3499999999999" font-size="12.5" fill="#000" font-family="Liberation Serif" textLength="62.6" lengthAdjust="spacingAndGlyphs" >y = 2( x + 2)² − 3</text>
<text x="67" y="551.5" font-size="3.6" fill="#6b6b8a" font-family="Liberation Sans" textLength="27" lengthAdjust="spacingAndGlyphs" >Дескриптор:</text>
<circle cx="69" cy="556" r="0.8" fill="#6b6b8a"/>
<circle cx="69" cy="562" r="0.8" fill="#6b6b8a"/>
<text x="73" y="557.3" font-size="3.6" fill="#6b6b8a" font-family="Liberation Sans" textLength="114" lengthAdjust="spacingAndGlyphs" >Квадраттық функцияның қасиеттерін қолдана алады.</text>
<text x="73" y="563.3" font-size="3.6" fill="#6b6b8a" font-family="Liberation Sans" textLength="89" lengthAdjust="spacingAndGlyphs" >Квадраттық функцияның теңдеуін жазады</text>
<use href="#slide" transform="translate(-95.090,558.987) scale(0.21482)"/>
<rect x="39.5" y="605.5" width="203" height="154" fill="none" stroke="#d24726" stroke-width="3" />
<rect x="55.5" y="824.5" width="178" height="41" fill="#ffffff" stroke="#3a3a3a" stroke-width="1" />
<text x="73.6" y="849" font-size="14.5" fill="#ff0000" font-family="Liberation Sans" font-weight="bold" font-style="italic" textLength="141.4" lengthAdjust="spacingAndGlyphs" >ЖҰПТЫҚ ЖҰМЫС:</text>
<rect x="51.7" y="976.5" width="123.3" height="10.5" fill="#ffff00" />
<path d="M51.7,987 V976.5 H175 V987" fill="none" stroke="#000" stroke-width="1" />
<g id="slide">
<rect x="633.5" y="223.5" width="931" height="700" fill="#f2f2f2" stroke="#d2d2d2" stroke-width="1" />
<rect x="718.5" y="259.5" width="769" height="91" fill="#ffff00" stroke="#000" stroke-width="1.1" rx="16" />
<text x="814.6" y="296.3" font-size="36" fill="#000" font-family="Liberation Sans" font-weight="bold" textLength="586.9" lengthAdjust="spacingAndGlyphs" >Төмендегі функцияның графигін</text>
<text x="1007" y="339.3" font-size="36" fill="#000" font-family="Liberation Sans" font-weight="bold" textLength="190.4" lengthAdjust="spacingAndGlyphs" >салыңдар:</text>
<line x1="1102.6" y1="350.5" x2="815" y2="418.3" stroke="#000" stroke-width="1.1" />
<path d="M826.8,420.5 L815,418.3 L824.5,411.0" fill="none" stroke="#000" stroke-width="1.1" />
<path d="M680.5,435.5 H1031.5 V540.5 L1011,560.5 H680.5 Z" fill="#ffff00" stroke="#000" stroke-width="1.1" />
<path d="M1011,560.5 L1015,545 L1031.5,540.5 Z" fill="#cccc00" stroke="#000" stroke-width="1" />
<text x="718.5" y="509.5" font-size="64" fill="#000" font-family="Liberation Serif" font-style="italic" >y</text>
<text x="757" y="509.5" font-size="64" fill="#000" font-family="Liberation Serif" textLength="36" lengthAdjust="spacingAndGlyphs">=</text>
<text x="804" y="509.5" font-size="64" fill="#000" font-family="Liberation Serif" >2</text>
<text x="839" y="509.5" font-size="64" fill="#000" font-family="Liberation Serif" font-style="italic" >x</text>
<text x="870.5" y="483.3" font-size="38.5" fill="#000" font-family="Liberation Serif" >2</text>
<text x="905" y="509.5" font-size="64" fill="#000" font-family="Liberation Serif" textLength="36" lengthAdjust="spacingAndGlyphs">+</text>
<text x="947" y="509.5" font-size="64" fill="#000" font-family="Liberation Serif" >9</text>
<rect x="1090.5" y="363.5" width="446" height="336.5" fill="#ffff00" stroke="#000" stroke-width="1.1" />
<line x1="1129.3" y1="385.5" x2="1154" y2="385.5" stroke="#ff0000" stroke-width="2" />
<path d="M1141.5,382 L1145,385.5 L1141.5,389 L1138,385.5 Z" fill="#f0a030" />
<text x="1156.5" y="392.5" font-size="18.5" fill="#000" font-family="Liberation Sans" >y</text>
<text x="1316.5" y="398.5" font-size="24.5" fill="#000" font-family="Liberation Sans" font-weight="bold" >y</text>
<line x1="1157.3" y1="638.5" x2="1473.3" y2="638.5" stroke="#8c8c8c" stroke-width="1.1" />
<text x="1143.5" y="646.1" font-size="20.5" fill="#000" font-family="Liberation Sans" text-anchor="end" >0</text>
<line x1="1157.3" y1="601.5" x2="1473.3" y2="601.5" stroke="#8c8c8c" stroke-width="1.1" />
<text x="1143.5" y="609.1" font-size="20.5" fill="#000" font-family="Liberation Sans" text-anchor="end" >5</text>
<line x1="1157.3" y1="564.5" x2="1473.3" y2="564.5" stroke="#8c8c8c" stroke-width="1.1" />
<text x="1143.5" y="572.1" font-size="20.5" fill="#000" font-family="Liberation Sans" text-anchor="end" >10</text>
<line x1="1157.3" y1="528.5" x2="1473.3" y2="528.5" stroke="#8c8c8c" stroke-width="1.1" />
<text x="1143.5" y="536.1" font-size="20.5" fill="#000" font-family="Liberation Sans" text-anchor="end" >15</text>
<line x1="1157.3" y1="491.5" x2="1473.3" y2="491.5" stroke="#8c8c8c" stroke-width="1.1" />
<text x="1143.5" y="499.1" font-size="20.5" fill="#000" font-family="Liberation Sans" text-anchor="end" >20</text>
<line x1="1157.3" y1="454.5" x2="1473.3" y2="454.5" stroke="#8c8c8c" stroke-width="1.1" />
<text x="1143.5" y="462.1" font-size="20.5" fill="#000" font-family="Liberation Sans" text-anchor="end" >25</text>
<line x1="1157.3" y1="417.5" x2="1473.3" y2="417.5" stroke="#8c8c8c" stroke-width="1.1" />
<text x="1143.5" y="425.1" font-size="20.5" fill="#000" font-family="Liberation Sans" text-anchor="end" >30</text>
<line x1="1164.5" y1="417.3" x2="1164.5" y2="646" stroke="#8c8c8c" stroke-width="1.1" />
<line x1="1164.5" y1="637.7" x2="1164.5" y2="646" stroke="#8c8c8c" stroke-width="1.1" />
<line x1="1208.5" y1="637.7" x2="1208.5" y2="646" stroke="#8c8c8c" stroke-width="1.1" />
<line x1="1253.5" y1="637.7" x2="1253.5" y2="646" stroke="#8c8c8c" stroke-width="1.1" />
<line x1="1297.5" y1="637.7" x2="1297.5" y2="646" stroke="#8c8c8c" stroke-width="1.1" />
<line x1="1341.5" y1="637.7" x2="1341.5" y2="646" stroke="#8c8c8c" stroke-width="1.1" />
<line x1="1385.5" y1="637.7" x2="1385.5" y2="646" stroke="#8c8c8c" stroke-width="1.1" />
<line x1="1429.5" y1="637.7" x2="1429.5" y2="646" stroke="#8c8c8c" stroke-width="1.1" />
<line x1="1473.5" y1="637.7" x2="1473.5" y2="646" stroke="#8c8c8c" stroke-width="1.1" />
<text x="1185" y="676.5" font-size="17.5" fill="#000" font-family="Liberation Sans" text-anchor="middle" >-3</text>
<text x="1229.2" y="676.5" font-size="17.5" fill="#000" font-family="Liberation Sans" text-anchor="middle" >-2</text>
<text x="1273.3" y="676.5" font-size="17.5" fill="#000" font-family="Liberation Sans" text-anchor="middle" >-1</text>
<text x="1318.5" y="676.5" font-size="17.5" fill="#000" font-family="Liberation Sans" text-anchor="middle" >0</text>
<text x="1362.6" y="676.5" font-size="17.5" fill="#000" font-family="Liberation Sans" text-anchor="middle" >1</text>
<text x="1406.8" y="676.5" font-size="17.5" fill="#000" font-family="Liberation Sans" text-anchor="middle" >2</text>
<text x="1450.9" y="676.5" font-size="17.5" fill="#000" font-family="Liberation Sans" text-anchor="middle" >3</text>
<polyline points="1186.0,439.3 1230.2,512.8 1274.3,556.9 1318.5,571.6 1362.6,556.9 1406.8,512.8 1450.9,439.3" fill="none" stroke="#ff0000" stroke-width="2.2" stroke-linejoin="round"/>
<path d="M1186,435.7 L1189.6,439.3 L1186,442.9 L1182.4,439.3 Z" fill="#f0a030" />
<path d="M1230.2,509.2 L1233.8,512.8 L1230.2,516.4 L1226.6000000000001,512.8 Z" fill="#f0a030" />
<path d="M1274.3,553.3 L1277.8999999999999,556.9 L1274.3,560.5 L1270.7,556.9 Z" fill="#f0a030" />
<path d="M1318.5,568.0 L1322.1,571.6 L1318.5,575.2 L1314.9,571.6 Z" fill="#f0a030" />
<path d="M1362.6,553.3 L1366.1999999999998,556.9 L1362.6,560.5 L1359.0,556.9 Z" fill="#f0a030" />
<path d="M1406.8,509.2 L1410.3999999999999,512.8 L1406.8,516.4 L1403.2,512.8 Z" fill="#f0a030" />
<path d="M1450.9,435.7 L1454.5,439.3 L1450.9,442.9 L1447.3000000000002,439.3 Z" fill="#f0a030" />
<rect x="660.5" y="705.5" width="724.5" height="122.3" fill="#ffff99" stroke="#000" stroke-width="1.1" />
<text x="669.5" y="732" font-size="20" fill="#000" font-family="Liberation Sans" font-weight="bold" font-style="italic" >x</text>
<text x="668.5" y="789" font-size="20" fill="#000" font-family="Liberation Sans" font-weight="bold" font-style="italic" >y</text>
<text x="762.7" y="732.5" font-size="18" fill="#000" font-family="Liberation Sans" font-weight="bold" font-style="italic" >-3</text>
<text x="855.8" y="732.5" font-size="18" fill="#000" font-family="Liberation Sans" font-weight="bold" font-style="italic" >-2</text>
<text x="948.8" y="732.5" font-size="18" fill="#000" font-family="Liberation Sans" font-weight="bold" font-style="italic" >-1</text>
<text x="1041.8" y="732.5" font-size="18" fill="#000" font-family="Liberation Sans" font-weight="bold" font-style="italic" >0</text>
<text x="1134.8" y="732.5" font-size="18" fill="#000" font-family="Liberation Sans" font-weight="bold" font-style="italic" >1</text>
<text x="1227.9" y="732.5" font-size="18" fill="#000" font-family="Liberation Sans" font-weight="bold" font-style="italic" >2</text>
<text x="1319" y="732.5" font-size="18" fill="#000" font-family="Liberation Sans" font-weight="bold" font-style="italic" >3</text>
<text x="762.7" y="789" font-size="18" fill="#000" font-family="Liberation Sans" font-weight="bold" font-style="italic" >27</text>
<text x="855.8" y="789" font-size="18" fill="#000" font-family="Liberation Sans" font-weight="bold" font-style="italic" >17</text>
<text x="948.8" y="789" font-size="18" fill="#000" font-family="Liberation Sans" font-weight="bold" font-style="italic" >11</text>
<text x="1041.8" y="789" font-size="18" fill="#000" font-family="Liberation Sans" font-weight="bold" font-style="italic" >9</text>
<text x="1134.8" y="789" font-size="18" fill="#000" font-family="Liberation Sans" font-weight="bold" font-style="italic" >11</text>
<text x="1227.9" y="789" font-size="18" fill="#000" font-family="Liberation Sans" font-weight="bold" font-style="italic" >17</text>
<text x="1319" y="789" font-size="18" fill="#000" font-family="Liberation Sans" font-weight="bold" font-style="italic" >27</text>
<text x="794.7" y="848.8" font-size="19.5" fill="#000" font-family="Liberation Sans" font-weight="bold" textLength="130.3" lengthAdjust="spacingAndGlyphs" >Дескриптор:</text>
<circle cx="797.5" cy="869.5" r="3" fill="#000"/>
<circle cx="797.5" cy="897.5" r="3" fill="#000"/>
<text x="820.5" y="876.7" font-size="23" fill="#000" font-family="Liberation Serif" font-style="italic" >y</text>
<text x="838.5" y="876.7" font-size="23" fill="#000" font-family="Liberation Serif" >=</text>
<text x="858.5" y="876.7" font-size="23" fill="#000" font-family="Liberation Serif" font-style="italic" >x</text>
<text x="870.5" y="869" font-size="14" fill="#000" font-family="Liberation Serif" font-style="italic" >2</text>
<text x="882.5" y="876.7" font-size="23" fill="#000" font-family="Liberation Serif" textLength="475.0" lengthAdjust="spacingAndGlyphs" >функциясының анықтамасы мен қасиетін біледі</text>
<text x="822.5" y="904.7" font-size="23" fill="#000" font-family="Liberation Serif" textLength="376.7" lengthAdjust="spacingAndGlyphs" >квадрат функцияның графигін салады</text>
<path d="M882.5,880 L884.5,878.8 L886.5,880 L888.5,878.8 L890.5,880 L892.5,878.8 L894.5,880 L896.5,878.8 L898.5,880 L900.5,878.8 L902.5,880 L904.5,878.8 L906.5,880 L908.5,878.8 L910.5,880 L912.5,878.8 L914.5,880 L916.5,878.8 L918.5,880 L920.5,878.8 L922.5,880 L924.5,878.8 L926.5,880 L928.5,878.8 L930.5,880 L932.5,878.8 L934.5,880 L936.5,878.8 L938.5,880 L940.5,878.8 L942.5,880 L944.5,878.8 L946.5,880 L948.5,878.8 L950.5,880 L952.5,878.8 L954.5,880 L956.5,878.8 L958.5,880 L960.5,878.8 L962.5,880 L964.5,878.8 L966.5,880 L968.5,878.8 L970.5,880 L972.5,878.8 L974.5,880 L976.5,878.8 L978.5,880 L980.5,878.8 L982.5,880 L984.5,878.8 L986.5,880 L988.5,878.8 L990.5,880 L992.5,878.8 L994.5,880 L996.5,878.8 L998.5,880 L1000.5,878.8 L1002.5,880 L1004.5,878.8 L1006.5,880 L1008.5,878.8 L1010.5,880 L1012.5,878.8 L1014.5,880 L1016.5,878.8 L1018.5,880 L1020.5,878.8 L1022.5,880 L1024.5,878.8 L1026.5,880 L1028.5,878.8 L1030.5,880 L1032.5,878.8 L1034.5,880" fill="none" stroke="#ff2020" stroke-width="0.9" style="vector-effect:none"/>
<path d="M1040,880 L1042,878.8 L1044,880 L1046,878.8 L1048,880 L1050,878.8 L1052,880 L1054,878.8 L1056,880 L1058,878.8 L1060,880 L1062,878.8 L1064,880 L1066,878.8 L1068,880 L1070,878.8 L1072,880 L1074,878.8 L1076,880 L1078,878.8 L1080,880 L1082,878.8 L1084,880 L1086,878.8 L1088,880 L1090,878.8 L1092,880 L1094,878.8 L1096,880 L1098,878.8 L1100,880 L1102,878.8 L1104,880 L1106,878.8 L1108,880 L1110,878.8 L1112,880 L1114,878.8 L1116,880 L1118,878.8 L1120,880 L1122,878.8 L1124,880 L1126,878.8 L1128,880 L1130,878.8 L1132,880 L1134,878.8 L1136,880 L1138,878.8 L1140,880 L1142,878.8 L1144,880 L1146,878.8 L1148,880 L1150,878.8 L1152,880 L1154,878.8 L1156,880 L1158,878.8 L1160,880 L1162,878.8 L1164,880" fill="none" stroke="#ff2020" stroke-width="0.9" style="vector-effect:none"/>
<path d="M1210,880 L1212,878.8 L1214,880 L1216,878.8 L1218,880 L1220,878.8 L1222,880 L1224,878.8 L1226,880 L1228,878.8 L1230,880 L1232,878.8 L1234,880 L1236,878.8 L1238,880 L1240,878.8 L1242,880 L1244,878.8 L1246,880 L1248,878.8 L1250,880 L1252,878.8 L1254,880 L1256,878.8 L1258,880 L1260,878.8 L1262,880 L1264,878.8 L1266,880 L1268,878.8 L1270,880 L1272,878.8 L1274,880 L1276,878.8 L1278,880 L1280,878.8 L1282,880 L1284,878.8 L1286,880 L1288,878.8 L1290,880 L1292,878.8 L1294,880" fill="none" stroke="#ff2020" stroke-width="0.9" style="vector-effect:none"/>
<path d="M1300,880 L1302,878.8 L1304,880 L1306,878.8 L1308,880 L1310,878.8 L1312,880 L1314,878.8 L1316,880 L1318,878.8 L1320,880 L1322,878.8 L1324,880 L1326,878.8 L1328,880 L1330,878.8 L1332,880 L1334,878.8 L1336,880 L1338,878.8 L1340,880 L1342,878.8 L1344,880 L1346,878.8 L1348,880 L1350,878.8 L1352,880 L1354,878.8 L1356,880 L1358,878.8 L1360,880" fill="none" stroke="#ff2020" stroke-width="0.9" style="vector-effect:none"/>
<path d="M904,907.5 L906,906.3 L908,907.5 L910,906.3 L912,907.5 L914,906.3 L916,907.5 L918,906.3 L920,907.5 L922,906.3 L924,907.5 L926,906.3 L928,907.5 L930,906.3 L932,907.5 L934,906.3 L936,907.5 L938,906.3 L940,907.5 L942,906.3 L944,907.5 L946,906.3 L948,907.5 L950,906.3 L952,907.5 L954,906.3 L956,907.5 L958,906.3 L960,907.5 L962,906.3 L964,907.5 L966,906.3 L968,907.5 L970,906.3 L972,907.5 L974,906.3 L976,907.5 L978,906.3 L980,907.5 L982,906.3 L984,907.5 L986,906.3 L988,907.5 L990,906.3 L992,907.5 L994,906.3 L996,907.5 L998,906.3 L1000,907.5 L1002,906.3 L1004,907.5 L1006,906.3 L1008,907.5 L1010,906.3 L1012,907.5 L1014,906.3" fill="none" stroke="#ff2020" stroke-width="0.9" style="vector-effect:none"/>
<path d="M1019,907.5 L1021,906.3 L1023,907.5 L1025,906.3 L1027,907.5 L1029,906.3 L1031,907.5 L1033,906.3 L1035,907.5 L1037,906.3 L1039,907.5 L1041,906.3 L1043,907.5 L1045,906.3 L1047,907.5 L1049,906.3 L1051,907.5 L1053,906.3 L1055,907.5 L1057,906.3 L1059,907.5 L1061,906.3 L1063,907.5 L1065,906.3 L1067,907.5 L1069,906.3 L1071,907.5 L1073,906.3 L1075,907.5 L1077,906.3 L1079,907.5 L1081,906.3 L1083,907.5 L1085,906.3 L1087,907.5 L1089,906.3 L1091,907.5 L1093,906.3 L1095,907.5 L1097,906.3 L1099,907.5 L1101,906.3 L1103,907.5 L1105,906.3 L1107,907.5 L1109,906.3 L1111,907.5 L1113,906.3" fill="none" stroke="#ff2020" stroke-width="0.9" style="vector-effect:none"/>
<path d="M1128.7,907.5 L1130.7,906.3 L1132.7,907.5 L1134.7,906.3 L1136.7,907.5 L1138.7,906.3 L1140.7,907.5 L1142.7,906.3 L1144.7,907.5 L1146.7,906.3 L1148.7,907.5 L1150.7,906.3 L1152.7,907.5 L1154.7,906.3 L1156.7,907.5 L1158.7,906.3 L1160.7,907.5 L1162.7,906.3 L1164.7,907.5 L1166.7,906.3 L1168.7,907.5 L1170.7,906.3 L1172.7,907.5 L1174.7,906.3 L1176.7,907.5 L1178.7,906.3 L1180.7,907.5 L1182.7,906.3 L1184.7,907.5 L1186.7,906.3 L1188.7,907.5 L1190.7,906.3 L1192.7,907.5 L1194.7,906.3 L1196.7,907.5 L1198.7,906.3 L1200.7,907.5" fill="none" stroke="#ff2020" stroke-width="0.9" style="vector-effect:none"/>
</g>
<rect x="303" y="938" width="1617" height="1" fill="#c8c8c8" />
<text x="317.8" y="968.8" font-size="20.5" fill="#555" font-family="Liberation Sans" textLength="173.8" lengthAdjust="spacingAndGlyphs" >Заметки к слайду</text>
<rect x="1894" y="217.5" width="24.5" height="639" fill="#dadada" />
<rect x="1894" y="217.5" width="24.5" height="24" fill="#fdfdfd" stroke="#d0d0d0" stroke-width="0.8" />
<path d="M1900.5,234 L1906,228 L1911.5,234 Z" fill="#7a7a7a" />
<rect x="1894" y="636" width="24.5" height="31.5" fill="#fdfdfd" stroke="#c8c8c8" stroke-width="0.8" />
<rect x="1894" y="831" width="24.5" height="24" fill="#fdfdfd" stroke="#d0d0d0" stroke-width="0.8" />
<path d="M1900.5,840 L1911.5,840 L1906,846 Z" fill="#7a7a7a" />
<path d="M1900.5,871 L1906,866 L1911.5,871 Z M1900.5,876 L1906,871 L1911.5,876 Z" fill="#6f6f6f" />
<path d="M1900.5,890 L1911.5,890 L1906,895 Z M1900.5,895 L1911.5,895 L1906,900 Z" fill="#6f6f6f" />
<text x="7.2" y="1010" font-size="15.8" fill="#555555" font-family="Liberation Sans" textLength="106.8" lengthAdjust="spacingAndGlyphs" >Слайд 13 из 17</text>
<path d="M136.5,994.5 H144 L145.5,996 L147,994.5 H154.5 V1008.5 H147 L145.5,1010 L144,1008.5 H136.5 Z M145.5,996 V1008.5" fill="none" stroke="#6a6a6a" stroke-width="1" />
<rect x="147.5" y="998" width="9" height="10" fill="#f1f1f1" />
<path d="M149.5,999.5 L155,1005 M155,999.5 L149.5,1005" fill="none" stroke="#6a6a6a" stroke-width="2" />
<text x="175" y="1010" font-size="15.8" fill="#555555" font-family="Liberation Sans" textLength="56.6" lengthAdjust="spacingAndGlyphs" >русский</text>
<path d="M1225,994.5 L1221,998 H1229 Z" fill="#8a8a8a" />
<path d="M1217,1001.5 H1234 M1217,1005.5 H1234 M1217,1009.5 H1234" fill="none" stroke="#8a8a8a" stroke-width="1.2" />
<text x="1239.7" y="1009.7" font-size="15.8" fill="#555555" font-family="Liberation Sans" textLength="59.8" lengthAdjust="spacingAndGlyphs" >Заметки</text>
<path d="M1322,995 H1341 V1006 H1331 L1326.5,1011 V1006 H1322 Z" fill="#6a6a6a" />
<text x="1346.5" y="1009.7" font-size="15.8" fill="#555555" font-family="Liberation Sans" textLength="89.8" lengthAdjust="spacingAndGlyphs" >Примечания</text>
<rect x="1459.5" y="988" width="44" height="32" fill="#cdcdcd" />
<rect x="1472.5" y="995.5" width="19" height="16" fill="none" stroke="#7a7a7a" stroke-width="1.1" />
<path d="M1477.5,995.5 V1011.5 M1480.5,998.5 H1488.5 V1006.5 H1480.5 Z" fill="none" stroke="#7a7a7a" stroke-width="1.1" />
<rect x="1516.5" y="995.5" width="8.5" height="6.5" fill="none" stroke="#7a7a7a" stroke-width="1.1" />
<rect x="1527.5" y="995.5" width="8.5" height="6.5" fill="none" stroke="#7a7a7a" stroke-width="1.1" />
<rect x="1516.5" y="1004.5" width="8.5" height="6.5" fill="none" stroke="#7a7a7a" stroke-width="1.1" />
<rect x="1527.5" y="1004.5" width="8.5" height="6.5" fill="none" stroke="#7a7a7a" stroke-width="1.1" />
<path d="M1562,996 V1011 Q1567,1009 1571.5,1011 Q1576,1009 1581,1011 V996 Q1576,994 1571.5,996 Q1567,994 1562,996 Z M1571.5,996 V1011 M1564.5,999.5 H1569 M1564.5,1003 H1569 M1564.5,1006.5 H1569 M1574,999.5 H1579 M1574,1003 H1579 M1574,1006.5 H1579" fill="none" stroke="#7a7a7a" stroke-width="1" />
<path d="M1607,995.5 H1626 M1609,995.5 V1003.5 H1624 V995.5 M1616.5,1003.5 V1010 M1612,1010.5 H1621" fill="none" stroke="#7a7a7a" stroke-width="1.1" />
<rect x="1644.5" y="1002" width="12" height="2" fill="#666" />
<rect x="1661" y="1003" width="149" height="1" fill="#a8a8a8" />
<rect x="1735.5" y="999" width="1" height="8" fill="#a8a8a8" />
<rect x="1705" y="995" width="6" height="16" fill="#555" />
<rect x="1816.5" y="1002" width="14" height="2" fill="#666" />
<rect x="1822.5" y="996" width="2" height="14" fill="#666" />
<text x="1846.8" y="1009.7" font-size="15.8" fill="#555555" font-family="Liberation Sans" textLength="30.0" lengthAdjust="spacingAndGlyphs" >65%</text>
<path d="M1893.5,995.5 H1910.5 V1011.5 H1893.5 Z" fill="none" stroke="#8a8a8a" stroke-width="1" />
<path d="M1898,1000 L1896,998 M1906,1000 L1908,998 M1898,1007 L1896,1009 M1906,1007 L1908,1009" fill="none" stroke="#6a6a6a" stroke-width="1" />
<defs>
<linearGradient id="edg1" x1="0" y1="0" x2="1" y2="1"><stop offset="0" stop-color="#35c1f1"/><stop offset="0.6" stop-color="#31b6a5"/><stop offset="1" stop-color="#66eb6e"/></linearGradient>
<linearGradient id="edg2" x1="0" y1="0" x2="0" y2="1"><stop offset="0" stop-color="#1b8ad8"/><stop offset="1" stop-color="#0c59a4"/></linearGradient>
<linearGradient id="umbg" x1="0" y1="1" x2="1" y2="0"><stop offset="0" stop-color="#dfe48a"/><stop offset="0.45" stop-color="#9cc07a"/><stop offset="1" stop-color="#3e7345"/></linearGradient>
<linearGradient id="umbr" x1="0" y1="0" x2="0.7" y2="1"><stop offset="0" stop-color="#f7a588"/><stop offset="0.4" stop-color="#d63a2a"/><stop offset="0.75" stop-color="#a01010"/><stop offset="1" stop-color="#e01818"/></linearGradient>
<linearGradient id="photo" x1="0" y1="0" x2="1" y2="1"><stop offset="0" stop-color="#2aa3f3"/><stop offset="1" stop-color="#1a5fd0"/></linearGradient>
<linearGradient id="coin" x1="0" y1="0" x2="0" y2="1"><stop offset="0" stop-color="#ffc040"/><stop offset="1" stop-color="#f08a10"/></linearGradient>
</defs>
<defs><linearGradient id="tbg" x1="0" y1="0" x2="1" y2="0"><stop offset="0" stop-color="#233640"/><stop offset="0.36" stop-color="#223641"/><stop offset="0.6" stop-color="#203448"/><stop offset="0.85" stop-color="#1d2b46"/><stop offset="1" stop-color="#1b2846"/></linearGradient></defs>
<rect x="0" y="1020" width="1920" height="60" fill="url(#tbg)" />
<path d="M23.8,1039.6 L34,1038.2 V1048.6 H23.8 Z M35.3,1038 L48.1,1036.2 V1048.6 H35.3 Z M23.8,1050 H34 V1060.4 L23.8,1059 Z M35.3,1050 H48.1 V1062.3 L35.3,1060.6 Z" fill="#ffffff" />
<rect x="72" y="1020" width="432" height="60" fill="#bdbdbd" />
<rect x="74" y="1022" width="428" height="58" fill="#f2f2f2" />
<circle cx="105.5" cy="1046.3" r="7.4" fill="none" stroke="#111" stroke-width="2"/>
<line x1="100" y1="1051.8" x2="90.8" y2="1061.5" stroke="#111" stroke-width="2.2" />
<text x="133" y="1059.75" font-size="22" fill="#1a1a1a" font-family="Liberation Sans" textLength="63.2" lengthAdjust="spacingAndGlyphs" >Поиск</text>
<path d="M423.4,1029.2 L440.6,1036.4 L443.4,1055.75 L435.6,1068.6 L418.4,1075.4 L401.9,1070.75 L394.1,1056 L402.2,1037.3 Z" fill="url(#umbg)" />
<path d="M417.5,1047.6 L423.4,1029.2 M417.5,1047.6 L440.6,1036.4 M417.5,1047.6 L443.4,1055.75 M417.5,1047.6 L435.6,1068.6 M417.5,1047.6 L418.4,1075.4 M417.5,1047.6 L401.9,1070.75 M417.5,1047.6 L394.1,1056 M417.5,1047.6 L402.2,1037.3" fill="none" stroke="#55794a" stroke-width="0.7" />
<path d="M417.5,1047.6 L423.8,1061.4" fill="none" stroke="#4a6a8a" stroke-width="1.3" />
<path d="M423.8,1061.4 Q425.5,1067 429,1066.5 Q432.5,1065.5 431.5,1062" fill="none" stroke="#a0623a" stroke-width="1.8" />
<path d="M440,1052 Q445,1040 453.8,1035.1 Q462,1030.5 471.3,1030.8 Q484,1031.5 491.9,1037.3 L488.8,1042 Q484,1044 475.6,1048.9 Q466,1048.5 457.5,1053.6 Q450,1052.5 443.8,1054.5 Z" fill="url(#umbr)" />
<path d="M453.8,1035.1 Q456,1042 457.5,1053.6 M471.3,1030.8 Q476,1040 475.6,1048.9" fill="none" stroke="#a01818" stroke-width="0.8" opacity="0.6"/>
<path d="M459.7,1029.2 L473.1,1062.6" fill="none" stroke="#5a7090" stroke-width="1.3" />
<path d="M473.1,1062.6 Q476.5,1068.5 473,1069.5 Q469.5,1070 469.4,1067.5" fill="none" stroke="#a0623a" stroke-width="1.8" />
<path d="M529,1039 V1042.5 H545.5 V1039 M529,1059.5 V1056 H545.5 V1059.5 M530.5,1044.5 H544 V1054 H530.5 Z" fill="none" stroke="#fff" stroke-width="1.6" />
<rect x="550.2" y="1038.5" width="1.6" height="22" fill="#fff" />
<rect x="549.2" y="1046" width="3.6" height="3.5" fill="#fff" />
<defs><linearGradient id="edgt" x1="0" y1="0" x2="1" y2="0.6"><stop offset="0" stop-color="#35c0f0"/><stop offset="0.5" stop-color="#2cc4c8"/><stop offset="1" stop-color="#6ee65a"/></linearGradient><linearGradient id="edgb" x1="0" y1="0" x2="0" y2="1"><stop offset="0" stop-color="#2a9ff0"/><stop offset="1" stop-color="#0a6fd0"/></linearGradient></defs>
<circle cx="617.1" cy="1050" r="18" fill="url(#edgt)"/>
<path d="M612,1050 C612,1046 615,1045.5 617.5,1045.5 C620,1045.5 621,1048 620.5,1051 C620,1053 621,1055 623,1056 C627,1057.5 631,1056.5 635.1,1052 L637,1063 L616,1063 Z" fill="#223641" />
<path d="M599.1,1050 C599.1,1046 603,1041 610,1041 C615,1041 619,1043 620.5,1046.3 C617,1044 612,1045 611,1050 C610,1056 614,1060 620,1060.5 C625,1061 629,1060.5 632.1,1059.3 C629,1065 623,1068 617,1068 C607,1068 599.1,1060 599.1,1050 Z" fill="url(#edgb)" />
<path d="M611,1050 C610,1056 614,1060 620,1060.5 C625,1061 629,1060.5 632.1,1059.3 C629,1065 623,1068 617,1068 C613,1068 609.5,1064 609.5,1057 C609.5,1054 610,1052 611,1050 Z" fill="#0e52a0" />
<rect x="587" y="1076" width="66" height="4" fill="#76b9ed" />
<path d="M676,1038.5 Q676,1037.2 677.3,1037.2 H688 L690.5,1039.5 H706.7 Q708,1039.5 708,1040.8 V1061 Q708,1062.2 706.7,1062.2 H677.3 Q676,1062.2 676,1061 Z" fill="#f8d26a" />
<path d="M676,1038.5 Q676,1037.2 677.3,1037.2 H688 L690.5,1039.5 V1041.8 H676 Z" fill="#e6a817" />
<path d="M681.3,1063 V1053 Q681.3,1051.3 683,1051.3 H700.2 Q701.9,1051.3 701.9,1053 V1063 H697 V1056.3 H686.7 V1063 Z" fill="#3a96dd" />
<defs><linearGradient id="storeg" x1="0" y1="0" x2="0" y2="1"><stop offset="0" stop-color="#ffffff"/><stop offset="1" stop-color="#e6e6e6"/></linearGradient></defs>
<rect x="749" y="1036.4" width="35" height="31.7" fill="url(#storeg)" rx="3.5" />
<path d="M757.8,1039.5 V1034 H775.3 V1039.5" fill="none" stroke="#29b6f6" stroke-width="1.8" />
<rect x="759" y="1045" width="7" height="7" fill="#f25022" />
<rect x="767" y="1045" width="7" height="7" fill="#7fba00" />
<rect x="759" y="1052.8" width="7" height="7" fill="#00a4ef" />
<rect x="767" y="1052.8" width="7" height="7" fill="#ffb900" />
<path d="M824,1043.6 L842,1032.5 L860,1043.6 V1066 H824 Z" fill="#0f5fb5" />
<path d="M826.5,1043 H857.5 L842,1053.5 Z" fill="#f4f4f4" />
<path d="M824,1043.6 L842,1055 L860,1043.6 V1066 H824 Z" fill="#32b4f0" />
<path d="M824,1066 L824,1047 L849,1066 Z" fill="#1d8fe0" />
<rect x="881" y="1020" width="73" height="60" fill="#475860" />
<rect x="881" y="1077" width="73" height="3" fill="#76b9ed" />
<rect x="919.5" y="1038" width="13.2" height="24" fill="#ffffff" stroke="#d24726" stroke-width="1.1" />
<path d="M925,1041 A4.3,4.3 0 1 0 929.3,1045.3 H925 Z" fill="none" stroke="#d24726" stroke-width="1.1" />
<path d="M925.5,1040.2 V1044.5 H929.8 A4.3,4.3 0 0 0 925.5,1040.2 Z" fill="#d24726" />
<path d="M922.5,1053.5 H930 M922.5,1057 H930" fill="none" stroke="#d24726" stroke-width="1.3" />
<path d="M901,1037.4 L920.1,1034.1 V1065.9 L901,1062.5 Z" fill="#d24726" />
<path d="M906.2,1056 V1042.5 H910.5 Q914.8,1042.5 914.8,1046.5 Q914.8,1050.5 910.5,1050.5 H906.2" fill="none" stroke="#fff" stroke-width="2.3" />
<path d="M994.5,1038.5 H1007 V1061.5 H994.5 Z" fill="#ffffff" stroke="#2b579a" stroke-width="1.1" />
<path d="M997,1041.5 H1004.5 M997,1044.5 H1004.5 M997,1047.5 H1004.5 M997,1050.5 H1004.5 M997,1053.5 H1004.5 M997,1056.5 H1004.5" fill="none" stroke="#2b579a" stroke-width="1.2" />
<path d="M975.7,1037.4 L995.5,1034.1 V1065.9 L975.7,1062.5 Z" fill="#2b579a" />
<path d="M978.8,1042.5 L981.5,1056 L984.8,1045.5 L988,1056 L990.8,1042.5" fill="none" stroke="#fff" stroke-width="1.9" />
<rect x="962" y="1077" width="47" height="3" fill="#76b9ed" />
<rect x="1011" y="1077" width="12" height="3" fill="#5a8fb8" />
<defs><linearGradient id="photog" x1="0" y1="0" x2="1" y2="1"><stop offset="0" stop-color="#1a8ee6"/><stop offset="0.55" stop-color="#3f6fd6"/><stop offset="1" stop-color="#9a58c8"/></linearGradient><linearGradient id="mtn" x1="0" y1="0" x2="0" y2="1"><stop offset="0" stop-color="#4fd4f7"/><stop offset="1" stop-color="#1b9ae8"/></linearGradient></defs>
<rect x="1051" y="1033.8" width="32" height="32.3" fill="url(#photog)" rx="4" />
<path d="M1051,1060 L1064.5,1046.5 Q1066.8,1044.3 1069,1046.5 L1083,1060.5 V1062 Q1083,1066.1 1079,1066.1 H1055 Q1051,1066.1 1051,1062 Z" fill="url(#mtn)" />
<path d="M1058,1066.1 L1071,1053.5 Q1073,1051.5 1075,1053.5 L1083,1061 V1062 Q1083,1066.1 1079,1066.1 Z" fill="#1787d8" />
<circle cx="1074" cy="1039.8" r="2.9" fill="#f2f2f2"/>
<rect x="1037" y="1077" width="61" height="3" fill="#76b9ed" />
<ellipse cx="1278" cy="1055" rx="15" ry="5.5" fill="url(#coin)" stroke="#d87a10" stroke-width="0.8"/>
<ellipse cx="1280" cy="1048" rx="15" ry="5.5" fill="url(#coin)" stroke="#d87a10" stroke-width="0.8"/>
<ellipse cx="1277" cy="1041" rx="15" ry="5.5" fill="url(#coin)" stroke="#d87a10" stroke-width="0.8"/>
<path d="M1272,1062 L1278,1067.5 L1284,1062" fill="none" stroke="#e04a20" stroke-width="2.6" />
<text x="1310.3" y="1059" font-size="21.5" fill="#ececec" font-family="Liberation Sans" textLength="81.7" lengthAdjust="spacingAndGlyphs" >USD/INR</text>
<text x="1405.5" y="1059" font-size="21.5" fill="#f26060" font-family="Liberation Sans" textLength="63.5" lengthAdjust="spacingAndGlyphs" >-0.21%</text>
<path d="M1507.5,1054 L1516,1045.5 L1524.5,1054" fill="none" stroke="#fff" stroke-width="1.5" />
<path d="M1546,1047 H1556 V1057 H1546 Z M1556,1050.5 L1561,1047.5 V1056.5 L1556,1053.5" fill="none" stroke="#fff" stroke-width="1.2" />
<path d="M1544.5,1044 Q1551,1039 1557,1044 M1544.5,1060 Q1551,1065 1557,1060" fill="none" stroke="#fff" stroke-width="1.1" />
<path d="M1576,1042 L1599,1038 V1060 L1576,1058 Z" fill="none" stroke="#fff" stroke-width="1.2" />
<path d="M1583,1047 A5,5 0 0 1 1592,1047 M1592,1052 A5,5 0 0 1 1583,1052" fill="none" stroke="#fff" stroke-width="1.1" />
<circle cx="1594.5" cy="1056" r="4.3" fill="#f7901e"/>
<rect x="1612.5" y="1046.5" width="21" height="11" fill="none" stroke="#fff" stroke-width="1.3" />
<rect x="1614.5" y="1048.5" width="14" height="7" fill="#fff" />
<rect x="1634" y="1049.5" width="2" height="5" fill="#fff" />
<path d="M1648.5,1048 H1652 L1657,1043.5 V1060.5 L1652,1056 H1648.5 Z" fill="none" stroke="#fff" stroke-width="1.2" />
<path d="M1661,1048.5 Q1663,1052 1661,1055.5 M1664.5,1046 Q1668,1052 1664.5,1058 M1668,1043.5 Q1673,1052 1668,1060.5" fill="none" stroke="#fff" stroke-width="1.1" />
<text x="1688" y="1057" font-size="20" fill="#f2f2f2" font-family="Liberation Sans" textLength="33.5" lengthAdjust="spacingAndGlyphs" >ENG</text>
<text x="1764" y="1043.6" font-size="19" fill="#f2f2f2" font-family="Liberation Sans" textLength="43.5" lengthAdjust="spacingAndGlyphs" >22:03</text>
<text x="1743.5" y="1070.6" font-size="19" fill="#f2f2f2" font-family="Liberation Sans" textLength="85.9" lengthAdjust="spacingAndGlyphs" >10.02.2025</text>
<path d="M1858,1038 H1882 V1056 H1868 L1862,1061.5 V1056 H1858 Z" fill="#ffffff" />
<path d="M1862,1043.5 H1878 M1862,1047 H1878 M1862,1050.5 H1874" fill="none" stroke="#1c2a46" stroke-width="1.2" />
<circle cx="1881.6" cy="1061.5" r="11.5" fill="#2b2d35" stroke="#8a8a8a" stroke-width="1.1"/>
<text x="1881.6" y="1068" font-size="18" fill="#fff" font-family="Liberation Sans" text-anchor="middle" >3</text>
<rect x="1912" y="1020" width="1.5" height="60" fill="#8a929c" />
</svg>
</body></html>
